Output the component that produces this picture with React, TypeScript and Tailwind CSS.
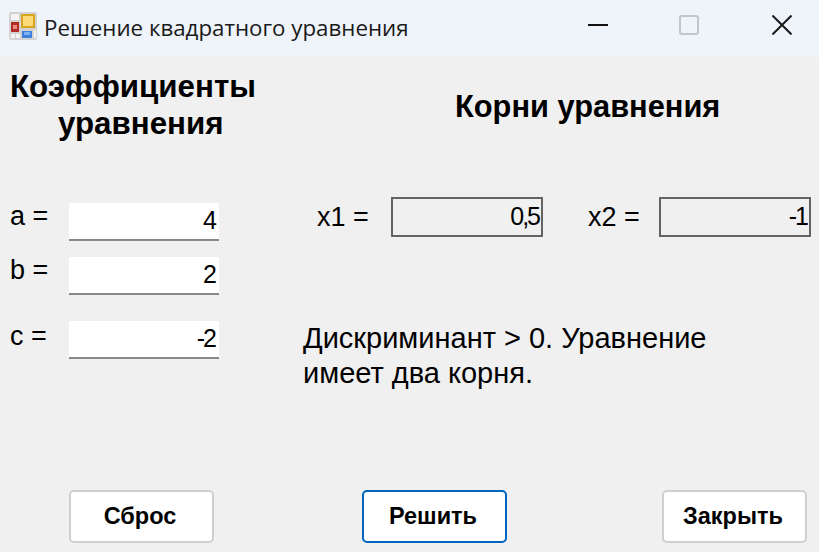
import React from 'react';

const coefficients = [
    { label: 'a =', value: '4', rowClass: 'h-[38px]', labelClass: 'pb-[11px]' },
    { label: 'b =', value: '2', rowClass: 'h-[38px] mt-[16px]', labelClass: 'pb-[11px]' },
    { label: 'c =', value: '-2', rowClass: 'h-[38px] mt-[26px]', labelClass: 'pb-[7px]' },
];

const AppIcon: React.FC = () => (
    <svg width="28" height="28" viewBox="0 0 28 28" className="shrink-0 -mt-[6px] blur-[0.5px]">
        <rect x="0" y="0" width="28" height="28" rx="2" fill="#d2d2d2" />
        <rect x="2" y="2" width="8" height="6" fill="#f4f4f4" />
        <rect x="2" y="10" width="8" height="10" fill="#b52a25" />
        <rect x="4" y="13" width="4" height="4" fill="#e88a80" />
        <rect x="12" y="2" width="14" height="14" fill="#d9a520" />
        <rect x="14" y="4" width="10" height="10" fill="#fbdc78" />
        <rect x="13" y="19" width="10" height="7" fill="#3f7fdc" />
        <rect x="15" y="20" width="6" height="3" fill="#7cb0f2" />
        <rect x="2" y="22" width="4" height="4" fill="#f4f4f4" />
        <rect x="7" y="22" width="4" height="4" fill="#f4f4f4" />
        <rect x="25" y="18" width="2" height="8" fill="#f4f4f4" />
    </svg>
);

const ActionButton: React.FC<{ label: string; primary?: boolean; className?: string }> = ({ label, primary, className }) => (
    <button
        className={`w-[145px] h-[53px] pr-[3px] bg-white rounded-[5px] border-2 text-[23.5px] font-bold text-black ${primary ? 'border-[#0067c0]' : 'border-[#cfcfcf]'} ${className ?? ''}`}
    >
        {label}
    </button>
);

const App: React.FC = () => {
    return (
        <div className="w-[819px] h-[552px] flex flex-col bg-[#f0f0f0] text-black font-['Liberation_Sans',sans-serif] overflow-hidden">
            <div className="h-[57px] shrink-0 bg-[#eef4f9] flex items-center pl-[9px]">
                <AppIcon />
                <span className="ml-[7px] text-[22.3px] text-[#1a1a1a] font-['Open_Sans',sans-serif] leading-none">Решение квадратного уравнения</span>
                <div className="ml-auto flex items-center mb-[7px]">
                    <svg width="20" height="20" viewBox="0 0 20 20" className="mr-[71px]">
                        <path d="M0 10H20" stroke="#111" strokeWidth="2" />
                    </svg>
                    <div className="w-[20px] h-[20px] border-2 border-[#c2c6c9] rounded-[3px] mr-[73px]" />
                    <svg width="20" height="20" viewBox="0 0 20 20" className="mr-[27px]">
                        <path d="M0.5 0.5L19.5 19.5M19.5 0.5L0.5 19.5" stroke="#1a1a1a" strokeWidth="2" />
                    </svg>
                </div>
            </div>

            <div className="flex-1 flex flex-col">
                <div className="flex-1 flex">
                    <div className="w-[285px] shrink-0">
                        <h2 className="mt-[11px] text-[31.3px] leading-[37px] font-bold whitespace-nowrap">
                            <span className="block pl-[10px]">Коэффициенты</span>
                            <span className="block pl-[58px]">уравнения</span>
                        </h2>
                        <div className="mt-[61px] pl-[10px]">
                            {coefficients.map(c => (
                                <div key={c.label} className={`flex items-center ${c.rowClass}`}>
                                    <span className={`w-[59px] text-[27px] leading-none ${c.labelClass}`}>{c.label}</span>
                                    <div className="w-[150px] h-full bg-white border-b-2 border-[#888888] flex items-center justify-end pr-[4px] text-[25px] tracking-[-2px]">
                                        {c.value}
                                    </div>
                                </div>
                            ))}
                        </div>
                    </div>

                    <div className="flex-1 min-w-0">
                        <h2 className="mt-[31px] pl-[170px] text-[30.8px] leading-[37px] font-bold whitespace-nowrap">Корни уравнения</h2>
                        <div className="mt-[72px] flex items-center h-[40px] pl-[32px]">
                            <span className="w-[74px] text-[27px] leading-none">x1 =</span>
                            <div className="w-[152px] h-full border-2 border-[#646464] flex items-center justify-end pr-[2px] text-[25px] tracking-[-2px]">0,5</div>
                            <span className="ml-[45px] w-[71px] text-[27px] leading-none">x2 =</span>
                            <div className="w-[152px] h-full border-2 border-[#646464] flex items-center justify-end pr-[2px] text-[25px] tracking-[-2px]">-1</div>
                        </div>
                        <p className="mt-[84px] ml-[18px] w-[420px] text-[29px] leading-[35px]">Дискриминант &gt; 0. Уравнение имеет два корня.</p>
                    </div>
                </div>

                <div className="flex pl-[69px] pb-[9px]">
                    <ActionButton label="Сброс" />
                    <ActionButton label="Решить" primary className="ml-[148px]" />
                    <ActionButton label="Закрыть" className="ml-[155px]" />
                </div>
            </div>
        </div>
    );
};

export default App;
